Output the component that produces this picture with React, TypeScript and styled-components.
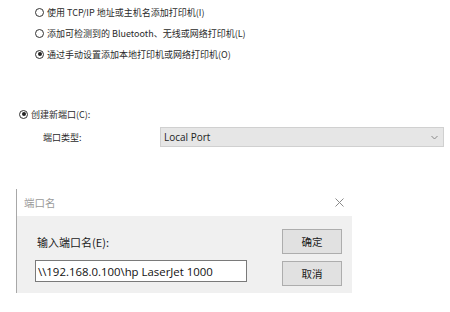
import React from "react";
import styled, { createGlobalStyle } from "styled-components";

const Global = createGlobalStyle`
  html, body { margin: 0; padding: 0; background: #ffffff; }
  body { width: 450px; height: 312px; overflow: hidden; font-family: "Noto Sans", "Noto Sans CJK SC", sans-serif; color: #1a1a1a; }
`;

const Page = styled.div`
  display: flex;
  flex-direction: column;
  width: 450px;
`;

const Options = styled.div`
  display: flex;
  flex-direction: column;
  gap: 7px;
  padding: 5px 0 0 35px;
`;

const RadioRow = styled.div<{ $indent?: number }>`
  display: flex;
  align-items: center;
  height: 14px;
  gap: 3px;
  padding-left: ${(p) => p.$indent ?? 0}px;
  font-family: "Noto Sans CJK SC", "Noto Sans", sans-serif;
  font-size: 9px;
  color: #2a2a2a;
  white-space: nowrap;
`;

const Circle = styled.span<{ $on?: boolean }>`
  box-sizing: border-box;
  width: 9px;
  height: 9px;
  border-radius: 50%;
  border: 1px solid #333;
  display: flex;
  align-items: center;
  justify-content: center;
  flex: none;
  &::after {
    content: "";
    width: 4px;
    height: 4px;
    border-radius: 50%;
    background: ${(p) => (p.$on ? "#222" : "transparent")};
  }
`;

const PortSection = styled.div`
  display: flex;
  flex-direction: column;
  margin-top: 46px;
  gap: 6px;
`;

const TypeRow = styled.div`
  display: grid;
  grid-template-columns: 117px 284px;
  align-items: center;
  padding-left: 43px;
  font-family: "Noto Sans CJK SC", "Noto Sans", sans-serif;
  font-size: 9px;
  color: #2a2a2a;
`;

const Select = styled.div`
  box-sizing: border-box;
  height: 20px;
  background: #e6e6e6;
  border: 1px solid #d0d0d0;
  display: flex;
  align-items: center;
  justify-content: space-between;
  padding: 0 5px 0 3px;
  font-family: "Open Sans", "Noto Sans", sans-serif;
  font-size: 10px;
  color: #222;
`;

const Dialog = styled.div`
  margin: 42px 0 0 16px;
  width: 335px;
  border-left: 1px solid #a8a8a8;
  display: flex;
  flex-direction: column;
`;

const TitleBar = styled.div`
  height: 27px;
  background: #fff;
  display: flex;
  align-items: center;
  justify-content: space-between;
  padding: 0 8px 0 7px;
  font-family: "Noto Sans CJK SC", "Noto Sans", sans-serif;
  font-size: 10.5px;
  color: #9a9a9a;
`;

const Body = styled.div`
  height: 77px;
  box-sizing: border-box;
  background: #f0f0f0;
  display: grid;
  grid-template-columns: 212px 60px;
  column-gap: 35px;
  padding: 13px 0 0 18px;
  align-items: start;
`;

const LeftCol = styled.div`
  display: flex;
  flex-direction: column;
`;

const Label = styled.div`
  margin-top: 5px;
  height: 16px;
  line-height: 16px;
  padding-left: 2px;
  font-family: "Noto Sans CJK SC", "Noto Sans", sans-serif;
  font-size: 11px;
  color: #1a1a1a;
`;

const Input = styled.div`
  margin-top: 10px;
  box-sizing: border-box;
  height: 22px;
  background: #fff;
  border: 1px solid #7a7a7a;
  display: flex;
  align-items: center;
  padding-left: 2px;
  font-family: "Open Sans", "Noto Sans", sans-serif;
  font-size: 11.4px;
  color: #111;
  white-space: nowrap;
`;

const Buttons = styled.div`
  display: flex;
  flex-direction: column;
  gap: 7px;
`;

const Button = styled.div`
  box-sizing: border-box;
  height: 25px;
  background: #e1e1e1;
  border: 1px solid #adadad;
  display: flex;
  align-items: center;
  justify-content: center;
  font-family: "Noto Sans CJK SC", "Noto Sans", sans-serif;
  font-size: 10.5px;
  color: #1a1a1a;
`;

const Chevron = () => (
  <svg width="7" height="5" viewBox="0 0 7 5">
    <path d="M0.5 1 L3.5 4 L6.5 1" fill="none" stroke="#888" strokeWidth="1" />
  </svg>
);

const CloseX = () => (
  <svg width="9" height="9" viewBox="0 0 9 9">
    <path d="M0.5 0.5 L8.5 8.5 M8.5 0.5 L0.5 8.5" stroke="#8a8a8a" strokeWidth="1" />
  </svg>
);

export default function App() {
  return (
    <>
      <Global />
      <Page>
        <Options>
          <RadioRow>
            <Circle />
            使用 TCP/IP 地址或主机名添加打印机(I)
          </RadioRow>
          <RadioRow>
            <Circle />
            添加可检测到的 Bluetooth、无线或网络打印机(L)
          </RadioRow>
          <RadioRow>
            <Circle $on />
            通过手动设置添加本地打印机或网络打印机(O)
          </RadioRow>
        </Options>
        <PortSection>
          <RadioRow $indent={19}>
            <Circle $on />
            创建新端口(C):
          </RadioRow>
          <TypeRow>
            <span>端口类型:</span>
            <Select>
              <span>Local Port</span>
              <Chevron />
            </Select>
          </TypeRow>
        </PortSection>
        <Dialog>
          <TitleBar>
            <span>端口名</span>
            <CloseX />
          </TitleBar>
          <Body>
            <LeftCol>
              <Label>输入端口名(E):</Label>
              <Input>\\192.168.0.100\hp LaserJet 1000</Input>
            </LeftCol>
            <Buttons>
              <Button>确定</Button>
              <Button>取消</Button>
            </Buttons>
          </Body>
        </Dialog>
      </Page>
    </>
  );
}
